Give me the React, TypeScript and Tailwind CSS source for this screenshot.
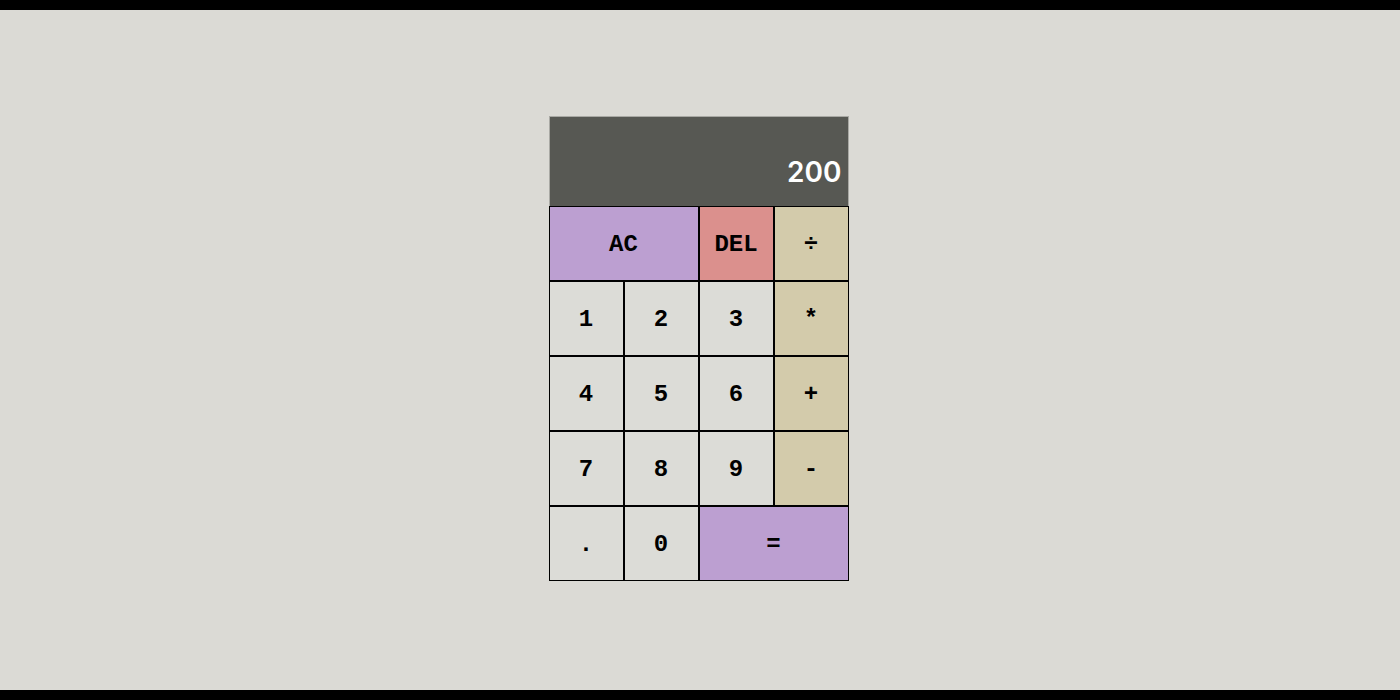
const KEYS: { label: string; bg: string; span?: boolean }[] = [
  { label: 'AC', bg: 'bg-[#bc9fd1]', span: true },
  { label: 'DEL', bg: 'bg-[#db908d]' },
  { label: '÷', bg: 'bg-[#d3cbab]' },
  { label: '1', bg: 'bg-[#dcdcd7]' },
  { label: '2', bg: 'bg-[#dcdcd7]' },
  { label: '3', bg: 'bg-[#dcdcd7]' },
  { label: '*', bg: 'bg-[#d3cbab]' },
  { label: '4', bg: 'bg-[#dcdcd7]' },
  { label: '5', bg: 'bg-[#dcdcd7]' },
  { label: '6', bg: 'bg-[#dcdcd7]' },
  { label: '+', bg: 'bg-[#d3cbab]' },
  { label: '7', bg: 'bg-[#dcdcd7]' },
  { label: '8', bg: 'bg-[#dcdcd7]' },
  { label: '9', bg: 'bg-[#dcdcd7]' },
  { label: '-', bg: 'bg-[#d3cbab]' },
  { label: '.', bg: 'bg-[#dcdcd7]' },
  { label: '0', bg: 'bg-[#dcdcd7]' },
  { label: '=', bg: 'bg-[#bc9fd1]', span: true },
];

export default function App() {
  return (
    <div className="bg-black py-[10px]">
      <div className="h-[680px] bg-[#dbdad5] flex items-center justify-center pr-[3px] pb-[3px]">
        <div className="grid grid-cols-[repeat(4,75px)] grid-rows-[90px_repeat(5,75px)]">
          {/* Display */}
          <div className="col-span-4 bg-[#575853] border border-b-0 border-[#a9a9a4] flex items-end justify-end pb-[18px] pr-[6px]">
            <span className="text-white text-[28px] font-semibold leading-[32px] font-['Inter','Liberation_Sans',sans-serif]">
              200
            </span>
          </div>

          {KEYS.map((k) => (
            <button
              key={k.label}
              className={`${k.bg} ${k.span ? 'col-span-2' : ''} border border-black text-black text-2xl font-bold pt-[2px] font-['Liberation_Mono','Courier_New',monospace] flex items-center justify-center`}
            >
              {k.label}
            </button>
          ))}
        </div>
      </div>
    </div>
  );
}
